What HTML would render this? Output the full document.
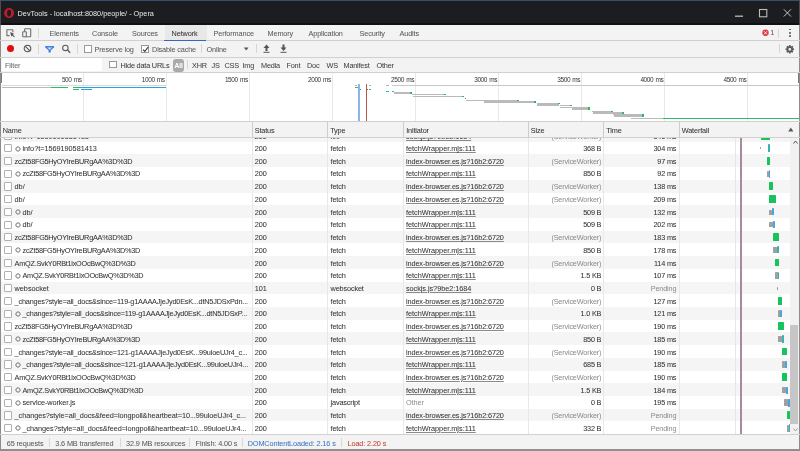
<!DOCTYPE html>
<html><head><meta charset="utf-8"><style>
*{box-sizing:border-box}
html,body{margin:0;padding:0;width:800px;height:451px;overflow:hidden;background:#fff;font-family:"Liberation Sans",sans-serif;color:#333}
.a{position:absolute;white-space:nowrap}
.t{font-size:7.3px;letter-spacing:-0.14px;line-height:10px;-webkit-text-stroke:0.04px currentColor}
.hl{position:absolute;height:1.1px;background:#d0d0d0;z-index:5}
.vl{position:absolute;width:1px;background:#cdcdcd}
.r{text-align:right}
.g{color:#8a8a8a;-webkit-text-stroke:0}
.u{text-decoration:underline;text-decoration-color:#8a8a8a;text-decoration-thickness:0.7px;text-underline-offset:0.5px}
</style></head><body><div style="position:absolute;left:0;top:0;width:800px;height:451px;overflow:hidden;will-change:transform">

<div class="a" style="left:0;top:0;width:800px;height:24.6px;background:#1b1d21"></div>
<div class="a" style="left:0;top:22.9px;width:800px;height:1.7px;background:#0f1114"></div>
<div class="a" style="left:0;top:0;width:800px;height:1.2px;background:#34506c"></div>
<div class="a" style="left:0;top:0;width:1.1px;height:25px;background:#4a4d52"></div>
<div class="a" style="left:798.9px;top:0;width:1.1px;height:25px;background:#4a4d52"></div>
<svg class="a" style="left:3.9px;top:7.8px" width="10.2" height="10.2" viewBox="0 0 10.2 10.2"><path fill-rule="evenodd" fill="#b91d2b" d="M5.1 0.1A5 5 0 1 1 5.1 10.1A5 5 0 1 1 5.1 0.1ZM5.1 1.75A2 3.35 0 1 0 5.1 8.45A2 3.35 0 1 0 5.1 1.75Z"/></svg>
<div class="a" style="left:17.6px;top:9px;font-size:7.3px;line-height:10px;color:#e8e8e8">DevTools - localhost:8080/people/ - Opera</div>
<svg class="a" style="left:0;top:0" width="800" height="25"><path d="M735 16.2H743" stroke="#bcbcbc" stroke-width="1.3"/><rect x="759.5" y="9.5" width="7.3" height="7.3" fill="none" stroke="#bcbcbc" stroke-width="1.1"/><path d="M783.8 9.3L791 16.5M791 9.3L783.8 16.5" stroke="#cfcfcf" stroke-width="0.95"/></svg>
<div class="a" style="left:0;top:25px;width:800px;height:15px;background:#f3f3f3"></div>
<div class="a" style="left:164.5px;top:25px;width:42px;height:15px;background:#e8e8e8"></div>
<div class="a" style="left:164.3px;top:39.7px;width:42.2px;height:1.4px;background:#3468b8;z-index:6"></div>
<div class="hl" style="left:0;top:39.6px;width:800px"></div>
<svg class="a" style="left:0;top:0" width="800" height="60" viewBox="0 0 800 60"><path d="M12.9 29.8H6.9V35.6H9.6" fill="none" stroke="#707070" stroke-width="1.1"/><path d="M12.9 29.8V32.2" fill="none" stroke="#707070" stroke-width="1.1"/><path d="M10.2 31.9L14.4 33.9L12.7 34.5L14.8 36.6L14.1 37.3L12 35.2L11.4 36.9Z" fill="#505050"/><rect x="24.6" y="28.7" width="6.1" height="8" rx="0.7" fill="none" stroke="#707070" stroke-width="1.1"/><rect x="22.7" y="31.7" width="3.6" height="5" rx="0.5" fill="#f3f3f3" stroke="#707070" stroke-width="1.1"/></svg>
<div class="vl" style="left:37.8px;top:28px;height:9.5px;background:#d8d8d8"></div>
<div class="a t" style="left:49.5px;top:29px;color:#5a5a5a;letter-spacing:-0.13px">Elements</div>
<div class="a t" style="left:92px;top:29px;color:#5a5a5a;letter-spacing:-0.13px">Console</div>
<div class="a t" style="left:132px;top:29px;color:#5a5a5a;letter-spacing:-0.13px">Sources</div>
<div class="a t" style="left:171.6px;top:29px;color:#333;letter-spacing:-0.13px">Network</div>
<div class="a t" style="left:213.5px;top:29px;color:#5a5a5a;letter-spacing:-0.13px">Performance</div>
<div class="a t" style="left:267.5px;top:29px;color:#5a5a5a;letter-spacing:-0.13px">Memory</div>
<div class="a t" style="left:308.5px;top:29px;color:#5a5a5a;letter-spacing:-0.13px">Application</div>
<div class="a t" style="left:359.5px;top:29px;color:#5a5a5a;letter-spacing:-0.13px">Security</div>
<div class="a t" style="left:399.5px;top:29px;color:#5a5a5a;letter-spacing:-0.13px">Audits</div>
<svg class="a" style="left:0;top:0" width="800" height="60"><circle cx="765.5" cy="32.8" r="3.2" fill="#e0383b"/><path d="M764 31.3L767 34.3M767 31.3L764 34.3" stroke="#fff" stroke-width="0.9"/></svg>
<div class="a t" style="left:770.2px;top:28.2px;color:#5a5a5a">1</div>
<div class="vl" style="left:778px;top:28.5px;height:9px;background:#d5d5d5"></div>
<div class="a" style="left:789.1px;top:28.6px;width:1.9px;height:1.9px;background:#555;border-radius:50%"></div>
<div class="a" style="left:789.1px;top:31.8px;width:1.9px;height:1.9px;background:#555;border-radius:50%"></div>
<div class="a" style="left:789.1px;top:35.0px;width:1.9px;height:1.9px;background:#555;border-radius:50%"></div>
<div class="a" style="left:0;top:40.5px;width:800px;height:16px;background:#f3f3f3"></div>
<div class="hl" style="left:0;top:56.8px;width:800px"></div>
<div class="a" style="left:6.7px;top:45.2px;width:7.3px;height:7.3px;border-radius:50%;background:#e30b0b"></div>
<svg class="a" style="left:23px;top:44px" width="9" height="9" viewBox="0 0 9 9"><circle cx="4.5" cy="4.5" r="3.3" fill="none" stroke="#555" stroke-width="1.05"/><path d="M2.2 2.2L6.8 6.8" stroke="#555" stroke-width="1.05"/></svg>
<div class="vl" style="left:37.8px;top:44px;height:9.5px;background:#d8d8d8"></div>
<svg class="a" style="left:0;top:0" width="800" height="60"><path d="M45.2 46H54.1V47.4L50.8 50.3V52.6H48.5V50.3L45.2 47.4Z" fill="#3f86e0"/><path d="M47.3 47.6H52L49.65 49.7Z" fill="#cfe0f7"/><circle cx="65.4" cy="47.9" r="2.7" fill="none" stroke="#5a5a5a" stroke-width="1.05"/><path d="M67.3 49.8L70.2 52.8" stroke="#5a5a5a" stroke-width="1.3"/></svg>
<div class="vl" style="left:77px;top:44px;height:9.5px;background:#d8d8d8"></div>
<div class="a" style="left:84px;top:45.2px;width:8px;height:7.6px;border:1px solid #999;background:#fff"></div>
<div class="a t" style="left:94.5px;top:45px;color:#5a5a5a">Preserve log</div>
<div class="a" style="left:141.2px;top:45.2px;width:7.6px;height:7.6px;border:1px solid #999;background:#fff"></div>
<svg class="a" style="left:142.2px;top:45.6px" width="7" height="7" viewBox="0 0 7 7"><path d="M1 3.6L2.8 5.4L6.2 1" fill="none" stroke="#333" stroke-width="1.05"/></svg>
<div class="a t" style="left:152px;top:45px;color:#5a5a5a">Disable cache</div>
<div class="vl" style="left:201px;top:44px;height:9px;background:#d5d5d5"></div>
<div class="a t" style="left:206.5px;top:45px;color:#5a5a5a">Online</div>
<svg class="a" style="left:0;top:0" width="300" height="60"><path d="M243.9 47.6H248.5L246.2 50.6Z" fill="#555"/></svg>
<div class="vl" style="left:255.5px;top:44px;height:9px;background:#d5d5d5"></div>
<svg class="a" style="left:263px;top:43.5px" width="7" height="9" viewBox="0 0 7 9"><path d="M3.5 0.5L0.5 4H2.5V7H4.5V4H6.5Z" fill="#555"/><rect x="0.5" y="7.8" width="6" height="1" fill="#555"/></svg>
<svg class="a" style="left:280px;top:43.5px" width="7" height="9" viewBox="0 0 7 9"><path d="M3.5 7L0.5 3.5H2.5V0.5H4.5V3.5H6.5Z" fill="#555"/><rect x="0.5" y="7.8" width="6" height="1" fill="#555"/></svg>
<div class="vl" style="left:779px;top:44px;height:9px;background:#d5d5d5"></div>
<svg class="a" style="left:0;top:0" width="800" height="60"><path fill-rule="evenodd" fill="#5a5a5a" d="M792.82 48.25L794.04 48.59L794.04 50.01L792.82 50.35L792.68 50.70L793.30 51.80L792.30 52.80L791.20 52.18L790.85 52.32L790.51 53.54L789.09 53.54L788.75 52.32L788.40 52.18L787.30 52.80L786.30 51.80L786.92 50.70L786.78 50.35L785.56 50.01L785.56 48.59L786.78 48.25L786.92 47.90L786.30 46.80L787.30 45.80L788.40 46.42L788.75 46.28L789.09 45.06L790.51 45.06L790.85 46.28L791.20 46.42L792.30 45.80L793.30 46.80L792.68 47.90ZM791.20 49.30A1.4 1.4 0 1 0 788.40 49.30A1.4 1.4 0 1 0 791.20 49.30Z"/></svg>
<div class="a" style="left:0;top:57px;width:800px;height:15px;background:#f3f3f3"></div>
<div class="a" style="left:2px;top:58px;width:100px;height:13px;background:#fff"></div>
<div class="a t" style="left:5px;top:61px;color:#6e6e6e">Filter</div>
<div class="a" style="left:109.4px;top:61.1px;width:7.6px;height:7.2px;border:1px solid #999;background:#fff"></div>
<div class="a t" style="left:120.5px;top:61px;color:#3a3a3a;letter-spacing:-0.19px">Hide data URLs</div>
<div class="a" style="left:173px;top:59px;width:11.3px;height:12.5px;border-radius:3px;background:#a9a9a9"></div>
<div class="a t" style="left:173px;width:11.3px;text-align:center;top:61px;color:#fff;font-weight:bold;font-size:6.6px;letter-spacing:0">All</div>
<div class="vl" style="left:187px;top:60px;height:9px;background:#d5d5d5"></div>
<div class="a t" style="left:192px;top:61px;color:#444;letter-spacing:-0.2px">XHR</div>
<div class="a t" style="left:211.5px;top:61px;color:#444;letter-spacing:-0.2px">JS</div>
<div class="a t" style="left:224.5px;top:61px;color:#444;letter-spacing:-0.2px">CSS</div>
<div class="a t" style="left:242.5px;top:61px;color:#444;letter-spacing:-0.2px">Img</div>
<div class="a t" style="left:261px;top:61px;color:#444;letter-spacing:-0.2px">Media</div>
<div class="a t" style="left:286.5px;top:61px;color:#444;letter-spacing:-0.2px">Font</div>
<div class="a t" style="left:307px;top:61px;color:#444;letter-spacing:-0.2px">Doc</div>
<div class="a t" style="left:326.5px;top:61px;color:#444;letter-spacing:-0.2px">WS</div>
<div class="a t" style="left:343.5px;top:61px;color:#444;letter-spacing:-0.2px">Manifest</div>
<div class="a t" style="left:376.5px;top:61px;color:#444;letter-spacing:-0.2px">Other</div>
<div class="hl" style="left:0;top:71.5px;width:800px"></div>
<div class="a" style="left:0;top:72px;width:800px;height:49px;background:#fff"></div>
<div class="vl" style="left:82.60px;top:72px;height:49px;background:#e8e8e8"></div>
<div class="a" style="left:43.10px;top:75.8px;width:38.5px;text-align:right;font-size:6.5px;letter-spacing:-0.42px;word-spacing:0.9px;line-height:8px;color:#333">500 ms</div>
<div class="vl" style="left:165.70px;top:72px;height:49px;background:#e8e8e8"></div>
<div class="a" style="left:126.20px;top:75.8px;width:38.5px;text-align:right;font-size:6.5px;letter-spacing:-0.42px;word-spacing:0.9px;line-height:8px;color:#333">1000 ms</div>
<div class="vl" style="left:248.80px;top:72px;height:49px;background:#e8e8e8"></div>
<div class="a" style="left:209.30px;top:75.8px;width:38.5px;text-align:right;font-size:6.5px;letter-spacing:-0.42px;word-spacing:0.9px;line-height:8px;color:#333">1500 ms</div>
<div class="vl" style="left:331.90px;top:72px;height:49px;background:#e8e8e8"></div>
<div class="a" style="left:292.40px;top:75.8px;width:38.5px;text-align:right;font-size:6.5px;letter-spacing:-0.42px;word-spacing:0.9px;line-height:8px;color:#333">2000 ms</div>
<div class="vl" style="left:415.00px;top:72px;height:49px;background:#e8e8e8"></div>
<div class="a" style="left:375.50px;top:75.8px;width:38.5px;text-align:right;font-size:6.5px;letter-spacing:-0.42px;word-spacing:0.9px;line-height:8px;color:#333">2500 ms</div>
<div class="vl" style="left:498.10px;top:72px;height:49px;background:#e8e8e8"></div>
<div class="a" style="left:458.60px;top:75.8px;width:38.5px;text-align:right;font-size:6.5px;letter-spacing:-0.42px;word-spacing:0.9px;line-height:8px;color:#333">3000 ms</div>
<div class="vl" style="left:581.20px;top:72px;height:49px;background:#e8e8e8"></div>
<div class="a" style="left:541.70px;top:75.8px;width:38.5px;text-align:right;font-size:6.5px;letter-spacing:-0.42px;word-spacing:0.9px;line-height:8px;color:#333">3500 ms</div>
<div class="vl" style="left:664.30px;top:72px;height:49px;background:#e8e8e8"></div>
<div class="a" style="left:624.80px;top:75.8px;width:38.5px;text-align:right;font-size:6.5px;letter-spacing:-0.42px;word-spacing:0.9px;line-height:8px;color:#333">4000 ms</div>
<div class="vl" style="left:747.40px;top:72px;height:49px;background:#e8e8e8"></div>
<div class="a" style="left:707.90px;top:75.8px;width:38.5px;text-align:right;font-size:6.5px;letter-spacing:-0.42px;word-spacing:0.9px;line-height:8px;color:#333">4500 ms</div>
<div class="a" style="left:0;top:72.4px;width:1.8px;height:10.6px;background:#7a7a7a"></div>
<div class="a" style="left:798.2px;top:72.4px;width:1.8px;height:10.6px;background:#7a7a7a"></div>
<div class="a" style="left:2px;top:85.2px;width:164.00px;height:1.00px;background:#d8d8d8"></div>
<div class="a" style="left:2px;top:86.8px;width:49.00px;height:1.20px;background:#bababa"></div>
<div class="a" style="left:51px;top:86.8px;width:17.00px;height:1.20px;background:#2bbd5b"></div>
<div class="a" style="left:73px;top:86.8px;width:5.00px;height:1.20px;background:#2bbd5b"></div>
<div class="a" style="left:78px;top:86.8px;width:88.00px;height:1.20px;background:#29a3d6"></div>
<div class="a" style="left:73px;top:89px;width:6.00px;height:1.00px;background:#2bbd5b"></div>
<div class="a" style="left:81px;top:89px;width:11.00px;height:1.00px;background:#29a3d6"></div>
<div class="a" style="left:355px;top:85.3px;width:2.00px;height:1.00px;background:#b0b0b0"></div>
<div class="a" style="left:369px;top:85.3px;width:2.00px;height:1.00px;background:#b0b0b0"></div>
<div class="a" style="left:386px;top:85.3px;width:3.00px;height:1.00px;background:#b0b0b0"></div>
<div class="a" style="left:391.5px;top:85.3px;width:408.50px;height:1.00px;background:#c8c8c8"></div>
<div class="a" style="left:355px;top:86.8px;width:3.00px;height:1.20px;background:#2bbd5b"></div>
<div class="a" style="left:359px;top:88.5px;width:2.00px;height:1.00px;background:#1e8fb0"></div>
<div class="a" style="left:366px;top:88.5px;width:1.50px;height:1.00px;background:#1e8fb0"></div>
<div class="a" style="left:369px;top:88.5px;width:2.00px;height:1.00px;background:#29a3d6"></div>
<div class="a" style="left:358px;top:90.55px;width:2.00px;height:1.10px;background:#1e8fb0"></div>
<div class="a" style="left:386px;top:90.75px;width:3.00px;height:1.10px;background:#29b5b5"></div>
<div class="a" style="left:392px;top:90.75px;width:1.50px;height:1.10px;background:#29b5b5"></div>
<div class="a" style="left:394px;top:92.25px;width:17.00px;height:1.30px;background:#bababa"></div>
<div class="a" style="left:410px;top:92.25px;width:2.00px;height:1.30px;background:#2bb090"></div>
<div class="a" style="left:412px;top:94.05px;width:33.00px;height:1.30px;background:#bababa"></div>
<div class="a" style="left:444px;top:94.05px;width:2.00px;height:1.30px;background:#2bb090"></div>
<div class="a" style="left:413px;top:95.75px;width:50.00px;height:1.30px;background:#bababa"></div>
<div class="a" style="left:462px;top:95.75px;width:2.00px;height:1.30px;background:#2bb090"></div>
<div class="a" style="left:465px;top:97.55px;width:1.00px;height:1.10px;background:#2bb090"></div>
<div class="a" style="left:466px;top:99.75px;width:53.00px;height:1.30px;background:#bababa"></div>
<div class="a" style="left:517px;top:99.75px;width:2.00px;height:1.30px;background:#2bb090"></div>
<div class="a" style="left:484px;top:101.35000000000001px;width:52.00px;height:1.30px;background:#bababa"></div>
<div class="a" style="left:534px;top:101.35000000000001px;width:2.00px;height:1.30px;background:#29a3b6"></div>
<div class="a" style="left:537px;top:102.95px;width:23.00px;height:1.30px;background:#bababa"></div>
<div class="a" style="left:558px;top:102.95px;width:2.00px;height:1.30px;background:#2bb090"></div>
<div class="a" style="left:537px;top:104.45px;width:22.00px;height:1.10px;background:#bababa"></div>
<div class="a" style="left:560px;top:104.55px;width:12.00px;height:1.30px;background:#bababa"></div>
<div class="a" style="left:570px;top:104.55px;width:2.00px;height:1.30px;background:#2bb090"></div>
<div class="a" style="left:560px;top:106.75px;width:30.00px;height:1.30px;background:#bababa"></div>
<div class="a" style="left:588px;top:106.75px;width:2.00px;height:1.30px;background:#1ec25a"></div>
<div class="a" style="left:572px;top:108.35000000000001px;width:18.00px;height:1.30px;background:#bababa"></div>
<div class="a" style="left:588px;top:108.35000000000001px;width:2.00px;height:1.30px;background:#1ec25a"></div>
<div class="a" style="left:592px;top:110.85000000000001px;width:21.00px;height:1.30px;background:#bababa"></div>
<div class="a" style="left:611px;top:110.85000000000001px;width:2.00px;height:1.30px;background:#2bb090"></div>
<div class="a" style="left:593px;top:112.35000000000001px;width:31.00px;height:1.30px;background:#bababa"></div>
<div class="a" style="left:622px;top:112.35000000000001px;width:2.00px;height:1.30px;background:#2bb090"></div>
<div class="a" style="left:613px;top:113.95px;width:31.00px;height:1.30px;background:#bababa"></div>
<div class="a" style="left:642px;top:113.95px;width:2.00px;height:1.30px;background:#2bb090"></div>
<div class="a" style="left:614px;top:115.45px;width:30.00px;height:1.30px;background:#bababa"></div>
<div class="a" style="left:642px;top:115.45px;width:2.00px;height:1.30px;background:#1ec25a"></div>
<div class="a" style="left:631px;top:117.75px;width:32.00px;height:1.30px;background:#bababa"></div>
<div class="a" style="left:663px;top:117.75px;width:137.00px;height:1.50px;background:#2bbd6b"></div>
<div class="a" style="left:358.4px;top:84.4px;width:1.5px;height:37px;background:#8bb5e6"></div>
<div class="a" style="left:366.1px;top:84.4px;width:1.2px;height:37px;background:#b9544a"></div>
<div class="hl" style="left:0;top:121px;width:800px"></div>
<div class="a" style="left:0;top:121.5px;width:800px;height:16px;background:#f3f3f3"></div>
<div class="a" style="left:0;top:137.5px;width:790.5px;height:296.7px;overflow:hidden">
<div class="a" style="left:0;top:-8.57px;width:790.5px;height:12.72px;background:#f5f5f5"></div>
<div class="a" style="left:0;top:4.15px;width:790.5px;height:12.72px;background:#ffffff"></div>
<div class="a" style="left:0;top:16.87px;width:790.5px;height:12.72px;background:#f5f5f5"></div>
<div class="a" style="left:0;top:29.59px;width:790.5px;height:12.72px;background:#ffffff"></div>
<div class="a" style="left:0;top:42.31px;width:790.5px;height:12.72px;background:#f5f5f5"></div>
<div class="a" style="left:0;top:55.03px;width:790.5px;height:12.72px;background:#ffffff"></div>
<div class="a" style="left:0;top:67.75px;width:790.5px;height:12.72px;background:#f5f5f5"></div>
<div class="a" style="left:0;top:80.47px;width:790.5px;height:12.72px;background:#ffffff"></div>
<div class="a" style="left:0;top:93.19px;width:790.5px;height:12.72px;background:#f5f5f5"></div>
<div class="a" style="left:0;top:105.91px;width:790.5px;height:12.72px;background:#ffffff"></div>
<div class="a" style="left:0;top:118.63px;width:790.5px;height:12.72px;background:#f5f5f5"></div>
<div class="a" style="left:0;top:131.35px;width:790.5px;height:12.72px;background:#ffffff"></div>
<div class="a" style="left:0;top:144.07px;width:790.5px;height:12.72px;background:#f5f5f5"></div>
<div class="a" style="left:0;top:156.79px;width:790.5px;height:12.72px;background:#ffffff"></div>
<div class="a" style="left:0;top:169.51px;width:790.5px;height:12.72px;background:#f5f5f5"></div>
<div class="a" style="left:0;top:182.23px;width:790.5px;height:12.72px;background:#ffffff"></div>
<div class="a" style="left:0;top:194.95px;width:790.5px;height:12.72px;background:#f5f5f5"></div>
<div class="a" style="left:0;top:207.67px;width:790.5px;height:12.72px;background:#ffffff"></div>
<div class="a" style="left:0;top:220.39px;width:790.5px;height:12.72px;background:#f5f5f5"></div>
<div class="a" style="left:0;top:233.11px;width:790.5px;height:12.72px;background:#ffffff"></div>
<div class="a" style="left:0;top:245.83px;width:790.5px;height:12.72px;background:#f5f5f5"></div>
<div class="a" style="left:0;top:258.55px;width:790.5px;height:12.72px;background:#ffffff"></div>
<div class="a" style="left:0;top:271.27px;width:790.5px;height:12.72px;background:#f5f5f5"></div>
<div class="a" style="left:0;top:283.99px;width:790.5px;height:12.72px;background:#ffffff"></div>
<div class="vl" style="left:251.5px;top:0;height:297px;background:#e8e8e8"></div>
<div class="vl" style="left:327.0px;top:0;height:297px;background:#e8e8e8"></div>
<div class="vl" style="left:403.0px;top:0;height:297px;background:#e8e8e8"></div>
<div class="vl" style="left:527.5px;top:0;height:297px;background:#e8e8e8"></div>
<div class="vl" style="left:603.0px;top:0;height:297px;background:#e8e8e8"></div>
<div class="vl" style="left:678.5px;top:0;height:297px;background:#e8e8e8"></div>
<div class="vl" style="left:734.5px;top:0;height:297px;background:#e6e6e6"></div>
<div class="a" style="left:739.8px;top:0;width:2.2px;height:297px;background:#a48c9e"></div>
<div class="a" style="left:4.2px;top:-5.97px;width:7.5px;height:8.2px;border:1px solid #b0b0b0;background:#fff;border-radius:1px"></div>
<div class="a t" style="left:14.6px;top:-5.37px;letter-spacing:-0.03px">info?t=1569190581413</div>
<div class="a t" style="left:254.8px;top:-5.37px;font-size:7.3px;letter-spacing:-0.1px">200</div>
<div class="a t" style="left:330.5px;top:-5.37px">xhr</div>
<div class="a t u" style="left:406px;top:-5.37px;letter-spacing:-0.05px">sockjs.js?9be2:1684</div>
<div class="a t r g" style="left:530px;width:71.3px;top:-5.37px;font-size:7.3px;letter-spacing:-0.18px">(ServiceWorker)</div>
<div class="a t r " style="left:605px;width:71.3px;top:-5.37px;font-size:7.3px;letter-spacing:-0.18px">546 ms</div>
<div class="a" style="left:760.5px;top:0.03px;width:9.50px;height:2.40px;background:#1ec25a;border-radius:0.6px"></div>
<div class="a" style="left:4.2px;top:6.75px;width:7.5px;height:8.2px;border:1px solid #b0b0b0;background:#fff;border-radius:1px"></div>
<svg class="a" style="left:14.6px;top:8.05px" width="6" height="6" viewBox="0 0 6 6"><circle cx="3" cy="3" r="2.1" fill="none" stroke="#6a6a6a" stroke-width="0.85"/><path d="M3 0.3V1.1M3 4.9V5.7M0.3 3H1.1M4.9 3H5.7" stroke="#8a8a8a" stroke-width="0.7"/></svg>
<div class="a t" style="left:22.5px;top:6.55px;letter-spacing:-0.03px">info?t=1569190581413</div>
<div class="a t" style="left:254.8px;top:6.55px;font-size:7.3px;letter-spacing:-0.1px">200</div>
<div class="a t" style="left:330.5px;top:6.55px">fetch</div>
<div class="a t u" style="left:406px;top:6.55px;letter-spacing:0px">fetchWrapper.mjs:111</div>
<div class="a t r " style="left:530px;width:71.3px;top:6.55px;font-size:7.3px;letter-spacing:-0.18px">368 B</div>
<div class="a t r " style="left:605px;width:71.3px;top:6.55px;font-size:7.3px;letter-spacing:-0.18px">304 ms</div>
<div class="a" style="left:760.2px;top:9.45px;width:0.80px;height:2.00px;background:#9a9a9a;border-radius:0.6px"></div>
<div class="a" style="left:767.8px;top:6.95px;width:2.20px;height:7.40px;background:#3ab0b0;border-radius:0.6px"></div>
<div class="a" style="left:4.2px;top:19.47px;width:7.5px;height:8.2px;border:1px solid #b0b0b0;background:#fff;border-radius:1px"></div>
<div class="a t" style="left:14.6px;top:19.27px;letter-spacing:-0.26px">zcZt58FG5HyOYIreBURgAA%3D%3D</div>
<div class="a t" style="left:254.8px;top:19.27px;font-size:7.3px;letter-spacing:-0.1px">200</div>
<div class="a t" style="left:330.5px;top:19.27px">fetch</div>
<div class="a t u" style="left:406px;top:19.27px;letter-spacing:-0.11px">index-browser.es.js?16b2:6720</div>
<div class="a t r g" style="left:530px;width:71.3px;top:19.27px;font-size:7.3px;letter-spacing:-0.18px">(ServiceWorker)</div>
<div class="a t r " style="left:605px;width:71.3px;top:19.27px;font-size:7.3px;letter-spacing:-0.18px">97 ms</div>
<div class="a" style="left:766.7px;top:19.27px;width:3.50px;height:8.20px;background:#17c35c;border-radius:0.6px"></div>
<div class="a" style="left:4.2px;top:32.19px;width:7.5px;height:8.2px;border:1px solid #b0b0b0;background:#fff;border-radius:1px"></div>
<svg class="a" style="left:14.6px;top:33.49px" width="6" height="6" viewBox="0 0 6 6"><circle cx="3" cy="3" r="2.1" fill="none" stroke="#6a6a6a" stroke-width="0.85"/><path d="M3 0.3V1.1M3 4.9V5.7M0.3 3H1.1M4.9 3H5.7" stroke="#8a8a8a" stroke-width="0.7"/></svg>
<div class="a t" style="left:22.5px;top:31.99px;letter-spacing:-0.26px">zcZt58FG5HyOYIreBURgAA%3D%3D</div>
<div class="a t" style="left:254.8px;top:31.99px;font-size:7.3px;letter-spacing:-0.1px">200</div>
<div class="a t" style="left:330.5px;top:31.99px">fetch</div>
<div class="a t u" style="left:406px;top:31.99px;letter-spacing:0px">fetchWrapper.mjs:111</div>
<div class="a t r " style="left:530px;width:71.3px;top:31.99px;font-size:7.3px;letter-spacing:-0.18px">850 B</div>
<div class="a t r " style="left:605px;width:71.3px;top:31.99px;font-size:7.3px;letter-spacing:-0.18px">92 ms</div>
<div class="a" style="left:767px;top:33.29px;width:1.50px;height:6.60px;background:#a0a0a0;border-radius:0.6px"></div>
<div class="a" style="left:768.5px;top:32.79px;width:1.50px;height:7.60px;background:#4aa4dc;border-radius:0.6px"></div>
<div class="a" style="left:4.2px;top:44.91px;width:7.5px;height:8.2px;border:1px solid #b0b0b0;background:#fff;border-radius:1px"></div>
<div class="a t" style="left:14.6px;top:44.71px;letter-spacing:-0.03px">db/</div>
<div class="a t" style="left:254.8px;top:44.71px;font-size:7.3px;letter-spacing:-0.1px">200</div>
<div class="a t" style="left:330.5px;top:44.71px">fetch</div>
<div class="a t u" style="left:406px;top:44.71px;letter-spacing:-0.11px">index-browser.es.js?16b2:6720</div>
<div class="a t r g" style="left:530px;width:71.3px;top:44.71px;font-size:7.3px;letter-spacing:-0.18px">(ServiceWorker)</div>
<div class="a t r " style="left:605px;width:71.3px;top:44.71px;font-size:7.3px;letter-spacing:-0.18px">138 ms</div>
<div class="a" style="left:769.1px;top:44.91px;width:4.20px;height:7.30px;background:#17c35c;border-radius:0.6px"></div>
<div class="a" style="left:4.2px;top:57.63px;width:7.5px;height:8.2px;border:1px solid #b0b0b0;background:#fff;border-radius:1px"></div>
<div class="a t" style="left:14.6px;top:57.43px;letter-spacing:-0.03px">db/</div>
<div class="a t" style="left:254.8px;top:57.43px;font-size:7.3px;letter-spacing:-0.1px">200</div>
<div class="a t" style="left:330.5px;top:57.43px">fetch</div>
<div class="a t u" style="left:406px;top:57.43px;letter-spacing:-0.11px">index-browser.es.js?16b2:6720</div>
<div class="a t r g" style="left:530px;width:71.3px;top:57.43px;font-size:7.3px;letter-spacing:-0.18px">(ServiceWorker)</div>
<div class="a t r " style="left:605px;width:71.3px;top:57.43px;font-size:7.3px;letter-spacing:-0.18px">209 ms</div>
<div class="a" style="left:769.1px;top:57.73px;width:6.90px;height:7.50px;background:#17c35c;border-radius:0.6px"></div>
<div class="a" style="left:4.2px;top:70.35px;width:7.5px;height:8.2px;border:1px solid #b0b0b0;background:#fff;border-radius:1px"></div>
<svg class="a" style="left:14.6px;top:71.65px" width="6" height="6" viewBox="0 0 6 6"><circle cx="3" cy="3" r="2.1" fill="none" stroke="#6a6a6a" stroke-width="0.85"/><path d="M3 0.3V1.1M3 4.9V5.7M0.3 3H1.1M4.9 3H5.7" stroke="#8a8a8a" stroke-width="0.7"/></svg>
<div class="a t" style="left:22.5px;top:70.15px;letter-spacing:-0.03px">db/</div>
<div class="a t" style="left:254.8px;top:70.15px;font-size:7.3px;letter-spacing:-0.1px">200</div>
<div class="a t" style="left:330.5px;top:70.15px">fetch</div>
<div class="a t u" style="left:406px;top:70.15px;letter-spacing:0px">fetchWrapper.mjs:111</div>
<div class="a t r " style="left:530px;width:71.3px;top:70.15px;font-size:7.3px;letter-spacing:-0.18px">509 B</div>
<div class="a t r " style="left:605px;width:71.3px;top:70.15px;font-size:7.3px;letter-spacing:-0.18px">132 ms</div>
<div class="a" style="left:769px;top:72.25px;width:3.00px;height:5.00px;background:#a0a0a0;border-radius:0.6px"></div>
<div class="a" style="left:772px;top:70.75px;width:2.00px;height:7.00px;background:#4aa4dc;border-radius:0.6px"></div>
<div class="a" style="left:4.2px;top:83.07px;width:7.5px;height:8.2px;border:1px solid #b0b0b0;background:#fff;border-radius:1px"></div>
<svg class="a" style="left:14.6px;top:84.37px" width="6" height="6" viewBox="0 0 6 6"><circle cx="3" cy="3" r="2.1" fill="none" stroke="#6a6a6a" stroke-width="0.85"/><path d="M3 0.3V1.1M3 4.9V5.7M0.3 3H1.1M4.9 3H5.7" stroke="#8a8a8a" stroke-width="0.7"/></svg>
<div class="a t" style="left:22.5px;top:82.87px;letter-spacing:-0.03px">db/</div>
<div class="a t" style="left:254.8px;top:82.87px;font-size:7.3px;letter-spacing:-0.1px">200</div>
<div class="a t" style="left:330.5px;top:82.87px">fetch</div>
<div class="a t u" style="left:406px;top:82.87px;letter-spacing:0px">fetchWrapper.mjs:111</div>
<div class="a t r " style="left:530px;width:71.3px;top:82.87px;font-size:7.3px;letter-spacing:-0.18px">509 B</div>
<div class="a t r " style="left:605px;width:71.3px;top:82.87px;font-size:7.3px;letter-spacing:-0.18px">202 ms</div>
<div class="a" style="left:769px;top:84.17px;width:4.30px;height:5.50px;background:#a0a0a0;border-radius:0.6px"></div>
<div class="a" style="left:773.3px;top:83.47px;width:2.20px;height:7.00px;background:#4aa4dc;border-radius:0.6px"></div>
<div class="a" style="left:4.2px;top:95.79px;width:7.5px;height:8.2px;border:1px solid #b0b0b0;background:#fff;border-radius:1px"></div>
<div class="a t" style="left:14.6px;top:95.59px;letter-spacing:-0.26px">zcZt58FG5HyOYIreBURgAA%3D%3D</div>
<div class="a t" style="left:254.8px;top:95.59px;font-size:7.3px;letter-spacing:-0.1px">200</div>
<div class="a t" style="left:330.5px;top:95.59px">fetch</div>
<div class="a t u" style="left:406px;top:95.59px;letter-spacing:-0.11px">index-browser.es.js?16b2:6720</div>
<div class="a t r g" style="left:530px;width:71.3px;top:95.59px;font-size:7.3px;letter-spacing:-0.18px">(ServiceWorker)</div>
<div class="a t r " style="left:605px;width:71.3px;top:95.59px;font-size:7.3px;letter-spacing:-0.18px">183 ms</div>
<div class="a" style="left:772.7px;top:95.79px;width:6.10px;height:7.70px;background:#17c35c;border-radius:0.6px"></div>
<div class="a" style="left:4.2px;top:108.51px;width:7.5px;height:8.2px;border:1px solid #b0b0b0;background:#fff;border-radius:1px"></div>
<svg class="a" style="left:14.6px;top:109.81px" width="6" height="6" viewBox="0 0 6 6"><circle cx="3" cy="3" r="2.1" fill="none" stroke="#6a6a6a" stroke-width="0.85"/><path d="M3 0.3V1.1M3 4.9V5.7M0.3 3H1.1M4.9 3H5.7" stroke="#8a8a8a" stroke-width="0.7"/></svg>
<div class="a t" style="left:22.5px;top:108.31px;letter-spacing:-0.26px">zcZt58FG5HyOYIreBURgAA%3D%3D</div>
<div class="a t" style="left:254.8px;top:108.31px;font-size:7.3px;letter-spacing:-0.1px">200</div>
<div class="a t" style="left:330.5px;top:108.31px">fetch</div>
<div class="a t u" style="left:406px;top:108.31px;letter-spacing:0px">fetchWrapper.mjs:111</div>
<div class="a t r " style="left:530px;width:71.3px;top:108.31px;font-size:7.3px;letter-spacing:-0.18px">850 B</div>
<div class="a t r " style="left:605px;width:71.3px;top:108.31px;font-size:7.3px;letter-spacing:-0.18px">178 ms</div>
<div class="a" style="left:773.3px;top:109.71px;width:3.70px;height:5.50px;background:#a0a0a0;border-radius:0.6px"></div>
<div class="a" style="left:777px;top:108.91px;width:2.00px;height:7.00px;background:#3ab0b0;border-radius:0.6px"></div>
<div class="a" style="left:4.2px;top:121.23px;width:7.5px;height:8.2px;border:1px solid #b0b0b0;background:#fff;border-radius:1px"></div>
<div class="a t" style="left:14.6px;top:121.03px;letter-spacing:-0.26px">AmQZ.SvkY0RBt1ixOOcBwQ%3D%3D</div>
<div class="a t" style="left:254.8px;top:121.03px;font-size:7.3px;letter-spacing:-0.1px">200</div>
<div class="a t" style="left:330.5px;top:121.03px">fetch</div>
<div class="a t u" style="left:406px;top:121.03px;letter-spacing:-0.11px">index-browser.es.js?16b2:6720</div>
<div class="a t r g" style="left:530px;width:71.3px;top:121.03px;font-size:7.3px;letter-spacing:-0.18px">(ServiceWorker)</div>
<div class="a t r " style="left:605px;width:71.3px;top:121.03px;font-size:7.3px;letter-spacing:-0.18px">114 ms</div>
<div class="a" style="left:775.3px;top:121.43px;width:3.70px;height:7.20px;background:#17c35c;border-radius:0.6px"></div>
<div class="a" style="left:4.2px;top:133.95px;width:7.5px;height:8.2px;border:1px solid #b0b0b0;background:#fff;border-radius:1px"></div>
<svg class="a" style="left:14.6px;top:135.25px" width="6" height="6" viewBox="0 0 6 6"><circle cx="3" cy="3" r="2.1" fill="none" stroke="#6a6a6a" stroke-width="0.85"/><path d="M3 0.3V1.1M3 4.9V5.7M0.3 3H1.1M4.9 3H5.7" stroke="#8a8a8a" stroke-width="0.7"/></svg>
<div class="a t" style="left:22.5px;top:133.75px;letter-spacing:-0.26px">AmQZ.SvkY0RBt1ixOOcBwQ%3D%3D</div>
<div class="a t" style="left:254.8px;top:133.75px;font-size:7.3px;letter-spacing:-0.1px">200</div>
<div class="a t" style="left:330.5px;top:133.75px">fetch</div>
<div class="a t u" style="left:406px;top:133.75px;letter-spacing:0px">fetchWrapper.mjs:111</div>
<div class="a t r " style="left:530px;width:71.3px;top:133.75px;font-size:7.3px;letter-spacing:-0.18px">1.5 KB</div>
<div class="a t r " style="left:605px;width:71.3px;top:133.75px;font-size:7.3px;letter-spacing:-0.18px">107 ms</div>
<div class="a" style="left:775px;top:134.75px;width:2.50px;height:6.70px;background:#a0a0a0;border-radius:0.6px"></div>
<div class="a" style="left:777.5px;top:134.25px;width:1.50px;height:7.70px;background:#3ab0b0;border-radius:0.6px"></div>
<div class="a" style="left:4.2px;top:146.67px;width:7.5px;height:8.2px;border:1px solid #b0b0b0;background:#fff;border-radius:1px"></div>
<div class="a t" style="left:14.6px;top:146.47px;letter-spacing:-0.03px">websocket</div>
<div class="a t" style="left:254.8px;top:146.47px;font-size:7.3px;letter-spacing:-0.1px">101</div>
<div class="a t" style="left:330.5px;top:146.47px">websocket</div>
<div class="a t u" style="left:406px;top:146.47px;letter-spacing:-0.05px">sockjs.js?9be2:1684</div>
<div class="a t r " style="left:530px;width:71.3px;top:146.47px;font-size:7.3px;letter-spacing:-0.18px">0 B</div>
<div class="a t r g" style="left:605px;width:71.3px;top:146.47px;font-size:7.3px;letter-spacing:-0.18px">Pending</div>
<div class="a" style="left:777px;top:149.27px;width:1.00px;height:3.30px;background:#9a9a9a;border-radius:0.6px"></div>
<div class="a" style="left:4.2px;top:159.39px;width:7.5px;height:8.2px;border:1px solid #b0b0b0;background:#fff;border-radius:1px"></div>
<div class="a t" style="left:14.6px;top:159.19px;letter-spacing:-0.185px">_changes?style=all_docs&amp;since=119-g1AAAAJjeJyd0EsK...dtN5JDSxPdn...</div>
<div class="a t" style="left:254.8px;top:159.19px;font-size:7.3px;letter-spacing:-0.1px">200</div>
<div class="a t" style="left:330.5px;top:159.19px">fetch</div>
<div class="a t u" style="left:406px;top:159.19px;letter-spacing:-0.11px">index-browser.es.js?16b2:6720</div>
<div class="a t r g" style="left:530px;width:71.3px;top:159.19px;font-size:7.3px;letter-spacing:-0.18px">(ServiceWorker)</div>
<div class="a t r " style="left:605px;width:71.3px;top:159.19px;font-size:7.3px;letter-spacing:-0.18px">127 ms</div>
<div class="a" style="left:778.1px;top:159.29px;width:4.10px;height:8.00px;background:#17c35c;border-radius:0.6px"></div>
<div class="a" style="left:4.2px;top:172.11px;width:7.5px;height:8.2px;border:1px solid #b0b0b0;background:#fff;border-radius:1px"></div>
<svg class="a" style="left:14.6px;top:173.41px" width="6" height="6" viewBox="0 0 6 6"><circle cx="3" cy="3" r="2.1" fill="none" stroke="#6a6a6a" stroke-width="0.85"/><path d="M3 0.3V1.1M3 4.9V5.7M0.3 3H1.1M4.9 3H5.7" stroke="#8a8a8a" stroke-width="0.7"/></svg>
<div class="a t" style="left:22.5px;top:171.91px;letter-spacing:-0.185px">_changes?style=all_docs&amp;since=119-g1AAAAJjeJyd0EsK...dtN5JDSxP...</div>
<div class="a t" style="left:254.8px;top:171.91px;font-size:7.3px;letter-spacing:-0.1px">200</div>
<div class="a t" style="left:330.5px;top:171.91px">fetch</div>
<div class="a t u" style="left:406px;top:171.91px;letter-spacing:0px">fetchWrapper.mjs:111</div>
<div class="a t r " style="left:530px;width:71.3px;top:171.91px;font-size:7.3px;letter-spacing:-0.18px">1.0 KB</div>
<div class="a t r " style="left:605px;width:71.3px;top:171.91px;font-size:7.3px;letter-spacing:-0.18px">121 ms</div>
<div class="a" style="left:778px;top:172.81px;width:2.00px;height:6.70px;background:#a0a0a0;border-radius:0.6px"></div>
<div class="a" style="left:780px;top:172.31px;width:2.00px;height:7.70px;background:#4aa4dc;border-radius:0.6px"></div>
<div class="a" style="left:4.2px;top:184.83px;width:7.5px;height:8.2px;border:1px solid #b0b0b0;background:#fff;border-radius:1px"></div>
<div class="a t" style="left:14.6px;top:184.63px;letter-spacing:-0.26px">zcZt58FG5HyOYIreBURgAA%3D%3D</div>
<div class="a t" style="left:254.8px;top:184.63px;font-size:7.3px;letter-spacing:-0.1px">200</div>
<div class="a t" style="left:330.5px;top:184.63px">fetch</div>
<div class="a t u" style="left:406px;top:184.63px;letter-spacing:-0.11px">index-browser.es.js?16b2:6720</div>
<div class="a t r g" style="left:530px;width:71.3px;top:184.63px;font-size:7.3px;letter-spacing:-0.18px">(ServiceWorker)</div>
<div class="a t r " style="left:605px;width:71.3px;top:184.63px;font-size:7.3px;letter-spacing:-0.18px">190 ms</div>
<div class="a" style="left:778.1px;top:184.53px;width:6.10px;height:7.80px;background:#17c35c;border-radius:0.6px"></div>
<div class="a" style="left:4.2px;top:197.55px;width:7.5px;height:8.2px;border:1px solid #b0b0b0;background:#fff;border-radius:1px"></div>
<svg class="a" style="left:14.6px;top:198.85px" width="6" height="6" viewBox="0 0 6 6"><circle cx="3" cy="3" r="2.1" fill="none" stroke="#6a6a6a" stroke-width="0.85"/><path d="M3 0.3V1.1M3 4.9V5.7M0.3 3H1.1M4.9 3H5.7" stroke="#8a8a8a" stroke-width="0.7"/></svg>
<div class="a t" style="left:22.5px;top:197.35px;letter-spacing:-0.26px">zcZt58FG5HyOYIreBURgAA%3D%3D</div>
<div class="a t" style="left:254.8px;top:197.35px;font-size:7.3px;letter-spacing:-0.1px">200</div>
<div class="a t" style="left:330.5px;top:197.35px">fetch</div>
<div class="a t u" style="left:406px;top:197.35px;letter-spacing:0px">fetchWrapper.mjs:111</div>
<div class="a t r " style="left:530px;width:71.3px;top:197.35px;font-size:7.3px;letter-spacing:-0.18px">850 B</div>
<div class="a t r " style="left:605px;width:71.3px;top:197.35px;font-size:7.3px;letter-spacing:-0.18px">185 ms</div>
<div class="a" style="left:778.1px;top:198.25px;width:3.90px;height:6.60px;background:#a0a0a0;border-radius:0.6px"></div>
<div class="a" style="left:782px;top:197.75px;width:2.00px;height:7.70px;background:#3ab0b0;border-radius:0.6px"></div>
<div class="a" style="left:4.2px;top:210.27px;width:7.5px;height:8.2px;border:1px solid #b0b0b0;background:#fff;border-radius:1px"></div>
<div class="a t" style="left:14.6px;top:210.07px;letter-spacing:-0.185px">_changes?style=all_docs&amp;since=121-g1AAAAJjeJyd0EsK...99uloeUJr4_c...</div>
<div class="a t" style="left:254.8px;top:210.07px;font-size:7.3px;letter-spacing:-0.1px">200</div>
<div class="a t" style="left:330.5px;top:210.07px">fetch</div>
<div class="a t u" style="left:406px;top:210.07px;letter-spacing:-0.11px">index-browser.es.js?16b2:6720</div>
<div class="a t r g" style="left:530px;width:71.3px;top:210.07px;font-size:7.3px;letter-spacing:-0.18px">(ServiceWorker)</div>
<div class="a t r " style="left:605px;width:71.3px;top:210.07px;font-size:7.3px;letter-spacing:-0.18px">190 ms</div>
<div class="a" style="left:782px;top:210.47px;width:4.90px;height:7.20px;background:#17c35c;border-radius:0.6px"></div>
<div class="a" style="left:4.2px;top:222.99px;width:7.5px;height:8.2px;border:1px solid #b0b0b0;background:#fff;border-radius:1px"></div>
<svg class="a" style="left:14.6px;top:224.29px" width="6" height="6" viewBox="0 0 6 6"><circle cx="3" cy="3" r="2.1" fill="none" stroke="#6a6a6a" stroke-width="0.85"/><path d="M3 0.3V1.1M3 4.9V5.7M0.3 3H1.1M4.9 3H5.7" stroke="#8a8a8a" stroke-width="0.7"/></svg>
<div class="a t" style="left:22.5px;top:222.79px;letter-spacing:-0.185px">_changes?style=all_docs&amp;since=121-g1AAAAJjeJyd0EsK...99uloeUJr4...</div>
<div class="a t" style="left:254.8px;top:222.79px;font-size:7.3px;letter-spacing:-0.1px">200</div>
<div class="a t" style="left:330.5px;top:222.79px">fetch</div>
<div class="a t u" style="left:406px;top:222.79px;letter-spacing:0px">fetchWrapper.mjs:111</div>
<div class="a t r " style="left:530px;width:71.3px;top:222.79px;font-size:7.3px;letter-spacing:-0.18px">685 B</div>
<div class="a t r " style="left:605px;width:71.3px;top:222.79px;font-size:7.3px;letter-spacing:-0.18px">185 ms</div>
<div class="a" style="left:781.7px;top:223.79px;width:3.30px;height:6.70px;background:#a0a0a0;border-radius:0.6px"></div>
<div class="a" style="left:785px;top:223.29px;width:2.00px;height:7.70px;background:#4aa4dc;border-radius:0.6px"></div>
<div class="a" style="left:4.2px;top:235.71px;width:7.5px;height:8.2px;border:1px solid #b0b0b0;background:#fff;border-radius:1px"></div>
<div class="a t" style="left:14.6px;top:235.51px;letter-spacing:-0.26px">AmQZ.SvkY0RBt1ixOOcBwQ%3D%3D</div>
<div class="a t" style="left:254.8px;top:235.51px;font-size:7.3px;letter-spacing:-0.1px">200</div>
<div class="a t" style="left:330.5px;top:235.51px">fetch</div>
<div class="a t u" style="left:406px;top:235.51px;letter-spacing:-0.11px">index-browser.es.js?16b2:6720</div>
<div class="a t r g" style="left:530px;width:71.3px;top:235.51px;font-size:7.3px;letter-spacing:-0.18px">(ServiceWorker)</div>
<div class="a t r " style="left:605px;width:71.3px;top:235.51px;font-size:7.3px;letter-spacing:-0.18px">190 ms</div>
<div class="a" style="left:782px;top:235.71px;width:4.90px;height:7.80px;background:#17c35c;border-radius:0.6px"></div>
<div class="a" style="left:4.2px;top:248.43px;width:7.5px;height:8.2px;border:1px solid #b0b0b0;background:#fff;border-radius:1px"></div>
<svg class="a" style="left:14.6px;top:249.73px" width="6" height="6" viewBox="0 0 6 6"><circle cx="3" cy="3" r="2.1" fill="none" stroke="#6a6a6a" stroke-width="0.85"/><path d="M3 0.3V1.1M3 4.9V5.7M0.3 3H1.1M4.9 3H5.7" stroke="#8a8a8a" stroke-width="0.7"/></svg>
<div class="a t" style="left:22.5px;top:248.23px;letter-spacing:-0.26px">AmQZ.SvkY0RBt1ixOOcBwQ%3D%3D</div>
<div class="a t" style="left:254.8px;top:248.23px;font-size:7.3px;letter-spacing:-0.1px">200</div>
<div class="a t" style="left:330.5px;top:248.23px">fetch</div>
<div class="a t u" style="left:406px;top:248.23px;letter-spacing:0px">fetchWrapper.mjs:111</div>
<div class="a t r " style="left:530px;width:71.3px;top:248.23px;font-size:7.3px;letter-spacing:-0.18px">1.5 KB</div>
<div class="a t r " style="left:605px;width:71.3px;top:248.23px;font-size:7.3px;letter-spacing:-0.18px">184 ms</div>
<div class="a" style="left:782px;top:249.63px;width:4.00px;height:6.10px;background:#a0a0a0;border-radius:0.6px"></div>
<div class="a" style="left:786px;top:249.03px;width:2.00px;height:7.30px;background:#4aa4dc;border-radius:0.6px"></div>
<div class="a" style="left:4.2px;top:261.15px;width:7.5px;height:8.2px;border:1px solid #b0b0b0;background:#fff;border-radius:1px"></div>
<svg class="a" style="left:14.6px;top:262.45px" width="6" height="6" viewBox="0 0 6 6"><circle cx="3" cy="3" r="2.1" fill="none" stroke="#6a6a6a" stroke-width="0.85"/><path d="M3 0.3V1.1M3 4.9V5.7M0.3 3H1.1M4.9 3H5.7" stroke="#8a8a8a" stroke-width="0.7"/></svg>
<div class="a t" style="left:22.5px;top:260.95px;letter-spacing:-0.09px">service-worker.js</div>
<div class="a t" style="left:254.8px;top:260.95px;font-size:7.3px;letter-spacing:-0.1px">200</div>
<div class="a t" style="left:330.5px;top:260.95px">javascript</div>
<div class="a t g" style="left:406px;top:260.95px;letter-spacing:-0.1px">Other</div>
<div class="a t r " style="left:530px;width:71.3px;top:260.95px;font-size:7.3px;letter-spacing:-0.18px">0 B</div>
<div class="a t r " style="left:605px;width:71.3px;top:260.95px;font-size:7.3px;letter-spacing:-0.18px">195 ms</div>
<div class="a" style="left:784.4px;top:261.85px;width:3.60px;height:6.70px;background:#a0a0a0;border-radius:0.6px"></div>
<div class="a" style="left:788px;top:261.35px;width:2.50px;height:7.80px;background:#4aa4dc;border-radius:0.6px"></div>
<div class="a" style="left:4.2px;top:273.87px;width:7.5px;height:8.2px;border:1px solid #b0b0b0;background:#fff;border-radius:1px"></div>
<div class="a t" style="left:14.6px;top:273.67px;letter-spacing:-0.06px">_changes?style=all_docs&amp;feed=longpoll&amp;heartbeat=10...99uloeUJr4_c...</div>
<div class="a t" style="left:254.8px;top:273.67px;font-size:7.3px;letter-spacing:-0.1px">200</div>
<div class="a t" style="left:330.5px;top:273.67px">fetch</div>
<div class="a t u" style="left:406px;top:273.67px;letter-spacing:-0.11px">index-browser.es.js?16b2:6720</div>
<div class="a t r g" style="left:530px;width:71.3px;top:273.67px;font-size:7.3px;letter-spacing:-0.18px">(ServiceWorker)</div>
<div class="a t r g" style="left:605px;width:71.3px;top:273.67px;font-size:7.3px;letter-spacing:-0.18px">Pending</div>
<div class="a" style="left:786.7px;top:273.77px;width:3.80px;height:7.80px;background:#17c35c;border-radius:0.6px"></div>
<div class="a" style="left:4.2px;top:286.59px;width:7.5px;height:8.2px;border:1px solid #b0b0b0;background:#fff;border-radius:1px"></div>
<svg class="a" style="left:14.6px;top:287.89px" width="6" height="6" viewBox="0 0 6 6"><circle cx="3" cy="3" r="2.1" fill="none" stroke="#6a6a6a" stroke-width="0.85"/><path d="M3 0.3V1.1M3 4.9V5.7M0.3 3H1.1M4.9 3H5.7" stroke="#8a8a8a" stroke-width="0.7"/></svg>
<div class="a t" style="left:22.5px;top:286.39px;letter-spacing:-0.06px">_changes?style=all_docs&amp;feed=longpoll&amp;heartbeat=10...99uloeUJr4...</div>
<div class="a t" style="left:254.8px;top:286.39px;font-size:7.3px;letter-spacing:-0.1px">200</div>
<div class="a t" style="left:330.5px;top:286.39px">fetch</div>
<div class="a t u" style="left:406px;top:286.39px;letter-spacing:0px">fetchWrapper.mjs:111</div>
<div class="a t r " style="left:530px;width:71.3px;top:286.39px;font-size:7.3px;letter-spacing:-0.18px">332 B</div>
<div class="a t r g" style="left:605px;width:71.3px;top:286.39px;font-size:7.3px;letter-spacing:-0.18px">Pending</div>
<div class="a" style="left:786.7px;top:287.09px;width:2.30px;height:7.20px;background:#a0a0a0;border-radius:0.6px"></div>
<div class="a" style="left:789px;top:286.59px;width:1.50px;height:8.20px;background:#3ab0b0;border-radius:0.6px"></div>
</div>
<div class="a" style="left:0;top:121.5px;width:800px;height:16px;background:#f3f3f3"></div>
<div class="hl" style="left:0;top:137px;width:800px"></div>
<div class="a t" style="left:2.7px;top:126px;color:#333">Name</div>
<div class="a t" style="left:254.7px;top:126px;color:#333">Status</div>
<div class="vl" style="left:251.5px;top:121.5px;height:16px"></div>
<div class="a t" style="left:330.2px;top:126px;color:#333">Type</div>
<div class="vl" style="left:327.0px;top:121.5px;height:16px"></div>
<div class="a t" style="left:406.2px;top:126px;color:#333">Initiator</div>
<div class="vl" style="left:403.0px;top:121.5px;height:16px"></div>
<div class="a t" style="left:530.7px;top:126px;color:#333">Size</div>
<div class="vl" style="left:527.5px;top:121.5px;height:16px"></div>
<div class="a t" style="left:606.2px;top:126px;color:#333">Time</div>
<div class="vl" style="left:603.0px;top:121.5px;height:16px"></div>
<div class="a t" style="left:681.7px;top:126px;color:#333">Waterfall</div>
<div class="vl" style="left:678.5px;top:121.5px;height:16px"></div>
<svg class="a" style="left:0;top:0" width="800" height="140"><path d="M788.2 131.6H793.4L790.8 127.6Z" fill="#5a5a5a"/></svg>
<div class="a" style="left:790.2px;top:137.5px;width:9.8px;height:297px;background:#f1f1f1"></div>
<div class="a" style="left:790.2px;top:325.2px;width:8.3px;height:99px;background:#c6c6c6"></div>
<svg class="a" style="left:793px;top:140px" width="5" height="4" viewBox="0 0 5 4"><path d="M0.5 3.5L2.5 1L4.5 3.5" fill="none" stroke="#505050" stroke-width="1"/></svg>
<svg class="a" style="left:793px;top:427.5px" width="5" height="4" viewBox="0 0 5 4"><path d="M0.5 0.5L2.5 3L4.5 0.5" fill="none" stroke="#a0a0a0" stroke-width="1"/></svg>
<div class="a" style="left:0;top:434px;width:800px;height:17px;background:#f3f3f3"></div>
<div class="hl" style="left:0;top:434px;width:800px"></div>
<div class="a t" style="left:6.7px;top:439px;color:#5a5a5a;letter-spacing:-0.12px">65 requests</div>
<div class="a t" style="left:55.2px;top:439px;color:#5a5a5a;letter-spacing:-0.12px">3.6 MB transferred</div>
<div class="a t" style="left:126px;top:439px;color:#5a5a5a;letter-spacing:-0.12px">32.9 MB resources</div>
<div class="a t" style="left:195.6px;top:439px;color:#5a5a5a;letter-spacing:-0.12px">Finish: 4.00 s</div>
<div class="a t" style="left:247.7px;top:439px;color:#3b78c4;letter-spacing:-0.12px">DOMContentLoaded: 2.16 s</div>
<div class="a t" style="left:347.5px;top:439px;color:#c2403a;letter-spacing:-0.12px">Load: 2.20 s</div>
<div class="vl" style="left:49.0px;top:437.5px;height:9.5px;background:#d8d8d8"></div>
<div class="vl" style="left:119.5px;top:437.5px;height:9.5px;background:#d8d8d8"></div>
<div class="vl" style="left:188.5px;top:437.5px;height:9.5px;background:#d8d8d8"></div>
<div class="vl" style="left:241.5px;top:437.5px;height:9.5px;background:#d8d8d8"></div>
<div class="vl" style="left:341.2px;top:437.5px;height:9.5px;background:#d8d8d8"></div>
<div class="a" style="left:0;top:25px;width:1px;height:426px;background:#8c8c8c"></div>
<div class="a" style="left:799px;top:25px;width:1px;height:426px;background:#8c8c8c"></div>
<div class="a" style="left:0;top:449.3px;width:800px;height:1.9px;background:#8f8f8f"></div>
</div></body></html>
